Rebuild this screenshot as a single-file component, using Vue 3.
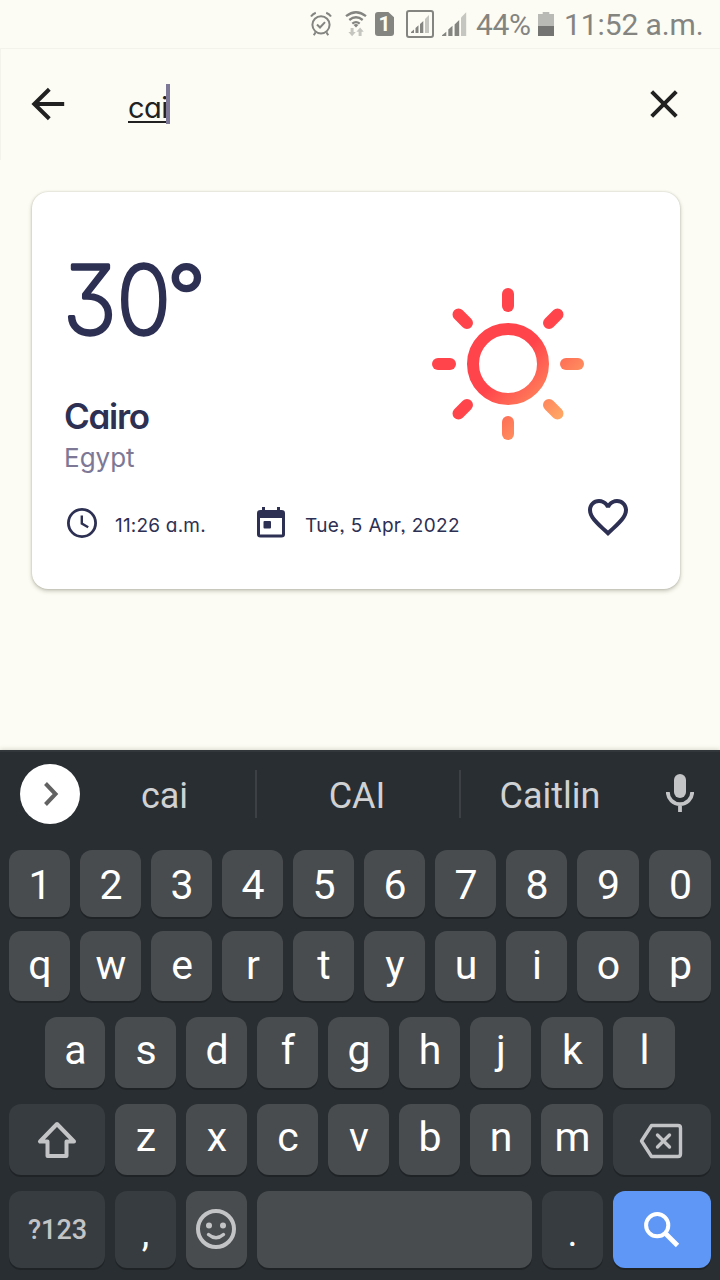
<script setup>
const digits = '1234567890'.split('')
const top = 'qwertyuiop'.split('')
const home = 'asdfghjkl'.split('')
const bottom = 'zxcvbnm'.split('')
const rays = [0, 45, 90, 135, 180, 225, 270, 315].map((deg) => {
  const a = (deg * Math.PI) / 180
  return {
    x1: Math.cos(a) * 58,
    y1: Math.sin(a) * 58,
    x2: Math.cos(a) * 70,
    y2: Math.sin(a) * 70,
  }
})
</script>

<template>
  <div class="screen">
    <header class="status">
      <svg class="alarm" width="22" height="26" viewBox="0 0 22 26" fill="none" stroke="#848481" stroke-width="2">
        <circle cx="11" cy="13.8" r="8.6" />
        <path d="M7 13.5l3 3 5-5.4M1 5.6Q2.6 3 5.8 1.8M21 5.6Q19.4 3 16.2 1.8M5.6 21.2l-1.8 3M16.4 21.2l1.8 3" />
      </svg>
      <svg class="wifi" width="22" height="26" viewBox="0 0 22 26">
        <g fill="none" stroke="#848481" stroke-width="2.3">
          <path d="M1 5.2Q11-2.8 21 5.2M4.3 9Q11 3.6 17.7 9M7.3 12.6Q11 9.6 14.7 12.6" />
        </g>
        <path d="M8.6 14Q11 12.2 13.4 14L11 16.6z" fill="#848481" />
        <path d="M5.6 17h3v4h2.2l-3.7 4.3L3.4 21h2.2zM13.6 25h3v-4.2h2.2L15.1 16.6l-3.7 4.2h2.2z" fill="#c6c6c1" />
      </svg>
      <span class="sim">1</span>
      <svg class="boxed" width="28" height="28" viewBox="0 0 28 28">
        <rect x="1" y="1" width="26" height="26" rx="2" fill="none" stroke="#848481" stroke-width="2" />
        <path d="M5 23v-1l3-2.5V23zM9.5 23v-5l3-2.7V23zM14 23v-9l3.3-3V23z" fill="#848481" />
        <path d="M19 23V9l4-4v18z" fill="#c6c6c1" />
      </svg>
      <svg class="signal" width="25" height="24" viewBox="0 0 25 24">
        <path d="M0 24v-.7l4.3-3.5V24zM6.3 24v-6.6l4.2-3.7V24zM12.6 24V12.5l4.6-4.6V24z" fill="#848481" />
        <path d="M19 24V5.6L24.2.2V24z" fill="#c6c6c1" />
      </svg>
      <span class="percent">44%</span>
      <svg class="battery" width="16" height="24" viewBox="0 0 16 24">
        <path d="M0 2h4.7V0h6.600v2H16v12H0z" fill="#b9b9b5" />
        <path d="M0 14h16v10H0z" fill="#747472" />
      </svg>
      <span class="clock">11:52 a.m.</span>
    </header>

    <div class="search">
      <svg class="back" width="34" height="34" viewBox="0 0 34 34" fill="none" stroke="#212121" stroke-width="4">
        <path d="M18.3 2.3L3.3 17l15 14.7M3.5 17h29.700" />
      </svg>
      <div class="query"><u>cai</u><i class="caret"></i></div>
      <svg class="clear" width="28" height="28" viewBox="0 0 28 28" fill="none" stroke="#212121" stroke-width="4">
        <path d="M1.7 1.7l24.6 24.6M26.3 1.7L1.7 26.3" />
      </svg>
    </div>

    <main class="card">
      <div class="overview">
        <div class="place">
          <svg class="temp" width="150" height="90" viewBox="0 0 150 90">
            <text class="temp-text" fill="#2d3052" stroke="#2d3052" stroke-linejoin="round" stroke-width="3.4">
              <tspan x="-1" y="76" font-size="95" textLength="108" lengthAdjust="spacingAndGlyphs">30</tspan><tspan x="103.5" y="67.5" font-size="83" stroke-width="4">°</tspan>
            </text>
          </svg>
          <div class="city">Cairo</div>
          <div class="country">Egypt</div>
        </div>
        <svg class="sun" width="152" height="152" viewBox="-76 -76 152 152">
          <defs>
            <linearGradient id="glow" gradientUnits="userSpaceOnUse" x1="2" y1="2" x2="54" y2="54">
              <stop offset="0" stop-color="#ff444b" />
              <stop offset="1" stop-color="#ffa966" />
            </linearGradient>
          </defs>
          <g fill="none" stroke="url(#glow)" stroke-width="12" stroke-linecap="round">
            <circle r="35" />
            <path v-for="(r, i) in rays" :key="i" :d="`M${r.x1} ${r.y1}L${r.x2} ${r.y2}`" />
          </g>
        </svg>
      </div>
      <div class="meta">
        <svg class="time-icon" width="30" height="30" viewBox="0 0 30 30" fill="none" stroke="#2d3052">
          <circle cx="15" cy="15" r="13.6" stroke-width="2.8" />
          <path d="M14.8 7.5v8l6.4 3.8" stroke-width="2.4" />
        </svg>
        <span class="time">11:26 a.m.</span>
        <svg class="date-icon" width="28" height="31" viewBox="0 0 28 31">
          <path d="M3.5 3H5V0h3v3h12V0h3v3h1.5Q28 3 28 6.2v21.300q0 3-3.500 3h-21q-3.500 0-3.500-3V6.200Q0 3 3.500 3zM3 11v16.500h22V11z" fill="#2d3052" fill-rule="evenodd" />
          <rect x="6.500" y="14" width="7.500" height="7.500" rx="1" fill="#2d3052" />
        </svg>
        <span class="date">Tue, 5 Apr, 2022</span>
        <svg class="heart" width="40" height="37" viewBox="2 3 20 18.35" preserveAspectRatio="none">
          <path fill="#2d3052" d="M16.500 3c-1.740 0-3.410.810-4.500 2.090C10.910 3.810 9.240 3 7.500 3 4.420 3 2 5.420 2 8.500c0 3.780 3.400 6.860 8.550 11.540L12 21.350l1.450-1.320C18.600 15.360 22 12.280 22 8.500 22 5.420 19.580 3 16.500 3zm-4.400 15.550l-.100.100-.100-.100C7.140 14.240 4 11.390 4 8.500 4 6.500 5.500 5 7.500 5c1.540 0 3.040.990 3.570 2.360h1.870C13.460 5.990 14.960 5 16.500 5c2 0 3.500 1.500 3.500 3.500 0 2.890-3.140 5.740-7.900 10.050z" />
        </svg>
      </div>
    </main>

    <section class="keyboard">
      <div class="suggestions">
        <span class="expand">
          <svg width="16" height="26" viewBox="0 0 16 26" fill="none" stroke="#626262" stroke-width="4">
            <path d="M2.500 2.500L12.500 13l-10 10.500" />
          </svg>
        </span>
        <span class="word first">cai</span>
        <span class="word">CAI</span>
        <span class="word last">Caitlin</span>
        <svg class="mic" width="28" height="38" viewBox="0 0 28 38">
          <rect x="8" y="0" width="12" height="24" rx="6" fill="#c3c4c6" />
          <path d="M1.800 18a12.200 12.200 0 0 0 24.400 0M14 30v8" fill="none" stroke="#c3c4c6" stroke-width="3.800" />
        </svg>
      </div>
      <div class="row numbers"><span v-for="k in digits" :key="k" class="key">{{ k }}</span></div>
      <div class="row top"><span v-for="k in top" :key="k" class="key">{{ k }}</span></div>
      <div class="row home"><span v-for="k in home" :key="k" class="key">{{ k }}</span></div>
      <div class="row bottom">
        <span class="key dark">
          <svg class="shift" width="40" height="38" viewBox="0 0 40 38" fill="none" stroke="#c3c4c6" stroke-width="4" stroke-linejoin="round">
            <path d="M20 3L3 20.500h7.500V35h19V20.500H37z" />
          </svg>
        </span>
        <span v-for="k in bottom" :key="k" class="key">{{ k }}</span>
        <span class="key dark">
          <svg class="erase" width="44" height="36" viewBox="0 0 44 36" fill="none" stroke="#c3c4c6" stroke-width="3.400" stroke-linejoin="round">
            <path d="M12.500 2.500H39q2.500 0 2.500 2.500v26q0 2.500-2.500 2.500H12.500L2.500 18z" />
            <path d="M18.500 12l12 12M30.500 12l-12 12" stroke-linecap="round" />
          </svg>
        </span>
      </div>
      <div class="row actions">
        <span class="key dark mode">?123</span>
        <span class="key dark punct">,</span>
        <span class="key">
          <svg class="smile" width="40" height="40" viewBox="0 0 40 40">
            <circle cx="20" cy="20" r="18" fill="none" stroke="#c3c4c6" stroke-width="4" />
            <circle cx="13" cy="16.500" r="3" fill="#c3c4c6" />
            <circle cx="27" cy="16.500" r="3" fill="#c3c4c6" />
            <path d="M12.500 25.500q7.500 6.500 15 0" fill="none" stroke="#c3c4c6" stroke-width="3.400" stroke-linecap="round" />
          </svg>
        </span>
        <span class="key"></span>
        <span class="key dark punct">.</span>
        <span class="key go">
          <svg width="36" height="36" viewBox="0 0 36 36" fill="none" stroke="#fff">
            <circle cx="13.200" cy="13.200" r="11.100" stroke-width="4" />
            <path d="M21 21l2 2" stroke-width="4" />
            <path d="M22.500 22.500l11 11" stroke-width="4.800" />
          </svg>
        </span>
      </div>
    </section>
  </div>
</template>

<style>
body {
  background: #fcfcf4;
}
</style>

<style scoped>
.screen {
  width: 720px;
  height: 1280px;
  display: flex;
  flex-direction: column;
  background: #fcfcf4;
  overflow: hidden;
  font-family: Inter, Lato, sans-serif;
  font-feature-settings: 'cv11', 'cv09', 'ss03';
  color: #2d3052;
}
svg {
  display: block;
  flex: none;
}
.status {
  height: 48px;
  flex: none;
  display: flex;
  align-items: flex-start;
  padding-left: 310px;
  box-sizing: border-box;
  font: 30px/36px Roboto, sans-serif;
  color: #848481;
  white-space: nowrap;
}
.alarm {
  margin-top: 11px;
}
.wifi {
  margin: 11px 0 0 13px;
}
.sim {
  width: 19px;
  height: 24px;
  margin: 12px 0 0 8px;
  border-radius: 3px;
  background: #848481;
  clip-path: polygon(0 0, 70% 0, 100% 22%, 100% 100%, 0 100%);
  color: #fcfcf4;
  font-size: 21px;
  font-weight: 700;
  line-height: 25px;
  text-align: center;
}
.boxed {
  margin: 10px 0 0 12px;
}
.signal {
  margin: 12px 0 0 8px;
}
.percent {
  width: 56px;
  margin: 7px 0 0 9px;
  letter-spacing: -0.4px;
}
.battery {
  margin: 12px 0 0 6px;
}
.clock {
  margin: 7px 0 0 10px;
  letter-spacing: -0.1px;
}
.search {
  height: 112px;
  flex: none;
  display: flex;
  box-sizing: border-box;
  border-top: 1px solid #f3f3ec;
  border-left: 1px solid #f3f3ec;
}
.back {
  margin: 38px 0 0 30px;
}
.query {
  width: 520px;
  display: flex;
  margin: 35px 0 0 63px;
  font-size: 29px;
  line-height: 48px;
  color: #212121;
}
.query u {
  width: 38px;
  letter-spacing: -0.5px;
  text-decoration-thickness: 2px;
  text-underline-offset: 3px;
  white-space: nowrap;
}
.caret {
  width: 4px;
  height: 40px;
  background: #7c7896;
}
.clear {
  margin: 41px 0 0 2px;
}
.card {
  width: 648px;
  height: 397px;
  flex: none;
  box-sizing: border-box;
  margin: 32px 0 0 32px;
  background: #fff;
  border-radius: 16px;
  box-shadow: 0 2px 4px rgba(70, 70, 50, 0.3), 0 0 2px rgba(70, 70, 50, 0.25);
}
.overview {
  display: flex;
  height: 300px;
}
.place {
  width: 368px;
  padding: 66px 0 0 32px;
}
.temp {
  overflow: visible;
}
.temp-text {
  font-family: Inter, sans-serif;
  font-weight: 200;
}
.city {
  margin-top: 44px;
  font-size: 35px;
  line-height: 48px;
  font-weight: 600;
  letter-spacing: -1.3px;
}
.country {
  font-size: 26px;
  line-height: 36px;
  color: #7c7896;
}
.sun {
  margin-top: 96px;
}
.meta {
  display: flex;
  align-items: flex-start;
  font-size: 19px;
  line-height: 24px;
  white-space: nowrap;
}
.time-icon {
  margin: 16px 0 0 35px;
}
.time {
  width: 124px;
  margin: 22px 0 0 18px;
  letter-spacing: 0.2px;
}
.date-icon {
  margin: 15px 0 0 18px;
}
.date {
  width: 261px;
  margin: 22px 0 0 20px;
  letter-spacing: 0.36px;
}
.heart {
  margin: 7px 0 0 22px;
}
.keyboard {
  height: 530px;
  flex: none;
  box-sizing: border-box;
  margin-top: auto;
  background: #292e32;
  border-top: 2px solid #31373a;
  box-shadow: 0 0 5px rgba(60, 60, 40, 0.25);
  font-family: Roboto, sans-serif;
  color: #fff;
}
.suggestions {
  height: 98px;
  display: flex;
  font-size: 36px;
  color: #cfd1d3;
}
.expand {
  width: 60px;
  height: 60px;
  margin: 12px 0 0 20px;
  border-radius: 50%;
  background: #fff;
  display: flex;
  align-items: center;
  justify-content: center;
}
.expand svg {
  margin-left: 2px;
}
.word {
  width: 200px;
  height: 48px;
  margin-top: 18px;
  padding-right: 2px;
  line-height: 52px;
  text-align: center;
  border-right: 2px solid #3d4145;
}
.word.first {
  width: 169px;
  padding-right: 6px;
}
.word.last {
  width: 178px;
  border: 0;
}
.mic {
  margin: 22px 0 0 25px;
}
.row {
  display: grid;
  grid-template-columns: repeat(8, 61px) 62px 62px;
  gap: 10px;
  padding-left: 9px;
}
.key {
  display: flex;
  align-items: center;
  justify-content: center;
  box-sizing: border-box;
  padding-left: 1px;
  border-radius: 12px;
  background: #494c4f;
  box-shadow: 0 2px 0 #1f2326;
  font-size: 41px;
  line-height: 48px;
}
.key.dark {
  background: #373c40;
}
.numbers {
  height: 67px;
}
.numbers .key {
  padding-top: 3px;
}
.top {
  height: 70px;
  margin-top: 14px;
}
.home {
  height: 71px;
  margin-top: 16px;
  padding-left: 45px;
  grid-template-columns: 60px repeat(6, 61px) 62px 62px;
}
.top .key {
  padding-bottom: 3px;
}
.home .key,
.bottom .key {
  padding-bottom: 5px;
}
.bottom {
  height: 71px;
  margin-top: 16px;
  grid-template-columns: 96px repeat(6, 61px) 62px 98px;
}
.bottom .key.dark {
  padding: 0;
}
.erase {
  margin: 3px 2px 0 0;
}
.actions {
  height: 77px;
  margin-top: 16px;
  grid-template-columns: 96px 61px 61px 275px 61px 98px;
}
.smile {
  margin: 0 2px 2px 0;
}
.key.mode {
  font-size: 27px;
  font-weight: 500;
  color: #c3c4c6;
}
.key.punct {
  padding-top: 6px;
  padding-left: 0;
  font-size: 38px;
}
.key.go {
  padding-left: 0;
  background: #5e97f6;
}
</style>
